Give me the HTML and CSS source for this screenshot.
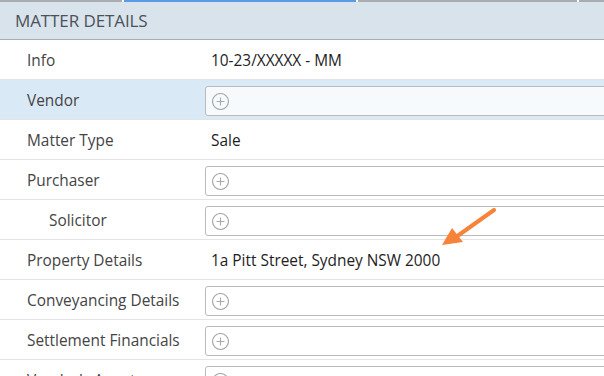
FILE: index.html
```html
<!DOCTYPE html>
<html lang="en">
<head>
    <meta charset="UTF-8">
    <meta name="viewport" content="width=device-width, initial-scale=1.0">
    <title>Matter Details</title>
    <link rel="stylesheet" href="styles.css">
</head>
<body>

    <div class="tabs">
        <span class="tab"></span>
        <span class="tab active"></span>
        <span class="tab wide"></span>
        <span class="tab last"></span>
    </div>

    <div class="section-head">MATTER DETAILS</div>

    <div class="matter">
        <div class="row">
            <div class="label">Info</div>
            <div class="value">10-23/XXXXX - MM</div>
        </div>
        <div class="row selected">
            <div class="label">Vendor</div>
            <div class="value"><div class="picker"><svg class="add" viewBox="0 0 16 16"><circle cx="8" cy="8" r="7.5"/><path d="M8 4.3v7.4M4.3 8h7.4"/></svg></div></div>
        </div>
        <div class="row">
            <div class="label">Matter Type</div>
            <div class="value">Sale</div>
        </div>
        <div class="row">
            <div class="label">Purchaser</div>
            <div class="value"><div class="picker"><svg class="add" viewBox="0 0 16 16"><circle cx="8" cy="8" r="7.5"/><path d="M8 4.3v7.4M4.3 8h7.4"/></svg></div></div>
        </div>
        <div class="row">
            <div class="label sub">Solicitor</div>
            <div class="value"><div class="picker"><svg class="add" viewBox="0 0 16 16"><circle cx="8" cy="8" r="7.5"/><path d="M8 4.3v7.4M4.3 8h7.4"/></svg></div></div>
        </div>
        <div class="row">
            <div class="label">Property Details</div>
            <div class="value">1a Pitt Street, Sydney NSW 2000</div>
        </div>
        <div class="row">
            <div class="label">Conveyancing Details</div>
            <div class="value"><div class="picker"><svg class="add" viewBox="0 0 16 16"><circle cx="8" cy="8" r="7.5"/><path d="M8 4.3v7.4M4.3 8h7.4"/></svg></div></div>
        </div>
        <div class="row">
            <div class="label">Settlement Financials</div>
            <div class="value"><div class="picker"><svg class="add" viewBox="0 0 16 16"><circle cx="8" cy="8" r="7.5"/><path d="M8 4.3v7.4M4.3 8h7.4"/></svg></div></div>
        </div>
        <div class="row">
            <div class="label">Vendor's Agent</div>
            <div class="value"><div class="picker"><svg class="add" viewBox="0 0 16 16"><circle cx="8" cy="8" r="7.5"/><path d="M8 4.3v7.4M4.3 8h7.4"/></svg></div></div>
        </div>
    </div>

    <!-- callout arrow pointing at the address -->
    <svg class="callout" width="70" height="50" viewBox="0 0 70 50">
        <path d="M62 2L24 29" stroke="#f5843a" stroke-width="4" stroke-linecap="round"/>
        <path d="M10 37L20 20L31 34Z" fill="#f5843a"/>
    </svg>

</body>
</html>
```

FILE: styles.css
```css
html, body {
    margin: 0;
    padding: 0;
    height: 100%;
    overflow: hidden;
    background: #fff;
    font-family: 'Open Sans', 'Noto Sans', sans-serif;
    color: #222;
}
.tabs {
    display: flex;
    gap: 2px;
    height: 2px;
}
.tab {
    width: 122px;
    border-top: 2px solid #a9adb1;
}
.tab.active {
    width: 232px;
    border-top-color: #5b9be6;
}
.tab.wide {
    width: 219px;
}
.tab.last {
    flex: 1;
}
.section-head {
    height: 37px;
    line-height: 38px;
    padding-left: 15px;
    background-color: #d9e3ec;
    border-bottom: 1px solid #a9adb1;
    color: #4b5259;
    font-size: 17px;
    letter-spacing: -0.1px;
}
.matter {
    width: 660px;
}
.row {
    display: flex;
    align-items: center;
    height: 40px;
    box-sizing: border-box;
    padding-top: 2px;
    border-bottom: 1px solid #e4e4e4;
    font-size: 15.4px;
}
.row.selected {
    background-color: #dae9f6;
}
.label {
    width: 178px;
    padding-left: 27px;
    color: #444;
}
.label.sub {
    width: 156px;
    padding-left: 49px;
}
.value {
    flex: 1;
    padding-left: 6px;
    color: #1e1e1e;
}
.value:has(.picker) {
    padding-left: 0;
}
.picker {
    height: 30px;
    margin-top: 1px;
    box-sizing: border-box;
    border: 1px solid #bababa;
    border-radius: 3px;
    background-color: rgba(255, 255, 255, 0.75);
    display: flex;
    align-items: center;
    padding-left: 6px;
}
.add {
    width: 17px;
    height: 17px;
    fill: none;
    stroke: #a9a9a9;
    stroke-width: 1.1;
}
.callout {
    position: absolute;
    left: 432px;
    top: 208px;
}
```
